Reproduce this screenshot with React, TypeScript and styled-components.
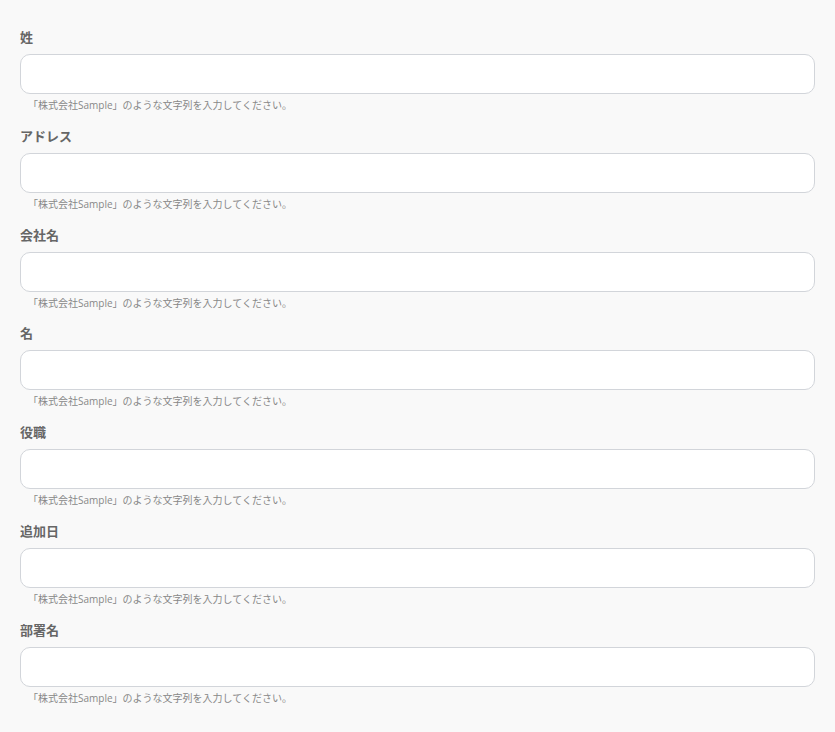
import React from "react";
import styled, { createGlobalStyle } from "styled-components";

const GlobalStyle = createGlobalStyle`
  html, body {
    margin: 0;
    padding: 0;
    background: #f9f9f9;
  }
  body {
    font-family: "Open Sans", "Noto Sans CJK JP", sans-serif;
  }
`;

const Form = styled.form`
  display: flex;
  flex-direction: column;
  gap: 13px;
  padding: 27px 20px 12px;
  box-sizing: border-box;
  min-height: 100vh;
`;

const Field = styled.div`
  display: flex;
  flex-direction: column;
`;

const Label = styled.label`
  font-size: 13px;
  line-height: 20px;
  font-weight: 700;
  color: #666;
  margin-bottom: 7px;
`;

const Input = styled.input`
  box-sizing: border-box;
  width: 100%;
  height: 40px;
  border: 1px solid #d2d5da;
  border-radius: 10px;
  background: #fff;
  padding: 0 12px;
  font: inherit;
  font-size: 13px;
  outline: none;
`;

const Help = styled.p`
  margin: 5px 0 0;
  padding-left: 8px;
  font-size: 10px;
  line-height: 13.8px;
  color: #888;
`;

const fields = ["姓", "アドレス", "会社名", "名", "役職", "追加日", "部署名"];

export default function App() {
  return (
    <>
      <GlobalStyle />
      <Form>
        {fields.map((name) => (
          <Field key={name}>
            <Label>{name}</Label>
            <Input type="text" />
            <Help>「株式会社Sample」のような文字列を入力してください。</Help>
          </Field>
        ))}
      </Form>
    </>
  );
}
